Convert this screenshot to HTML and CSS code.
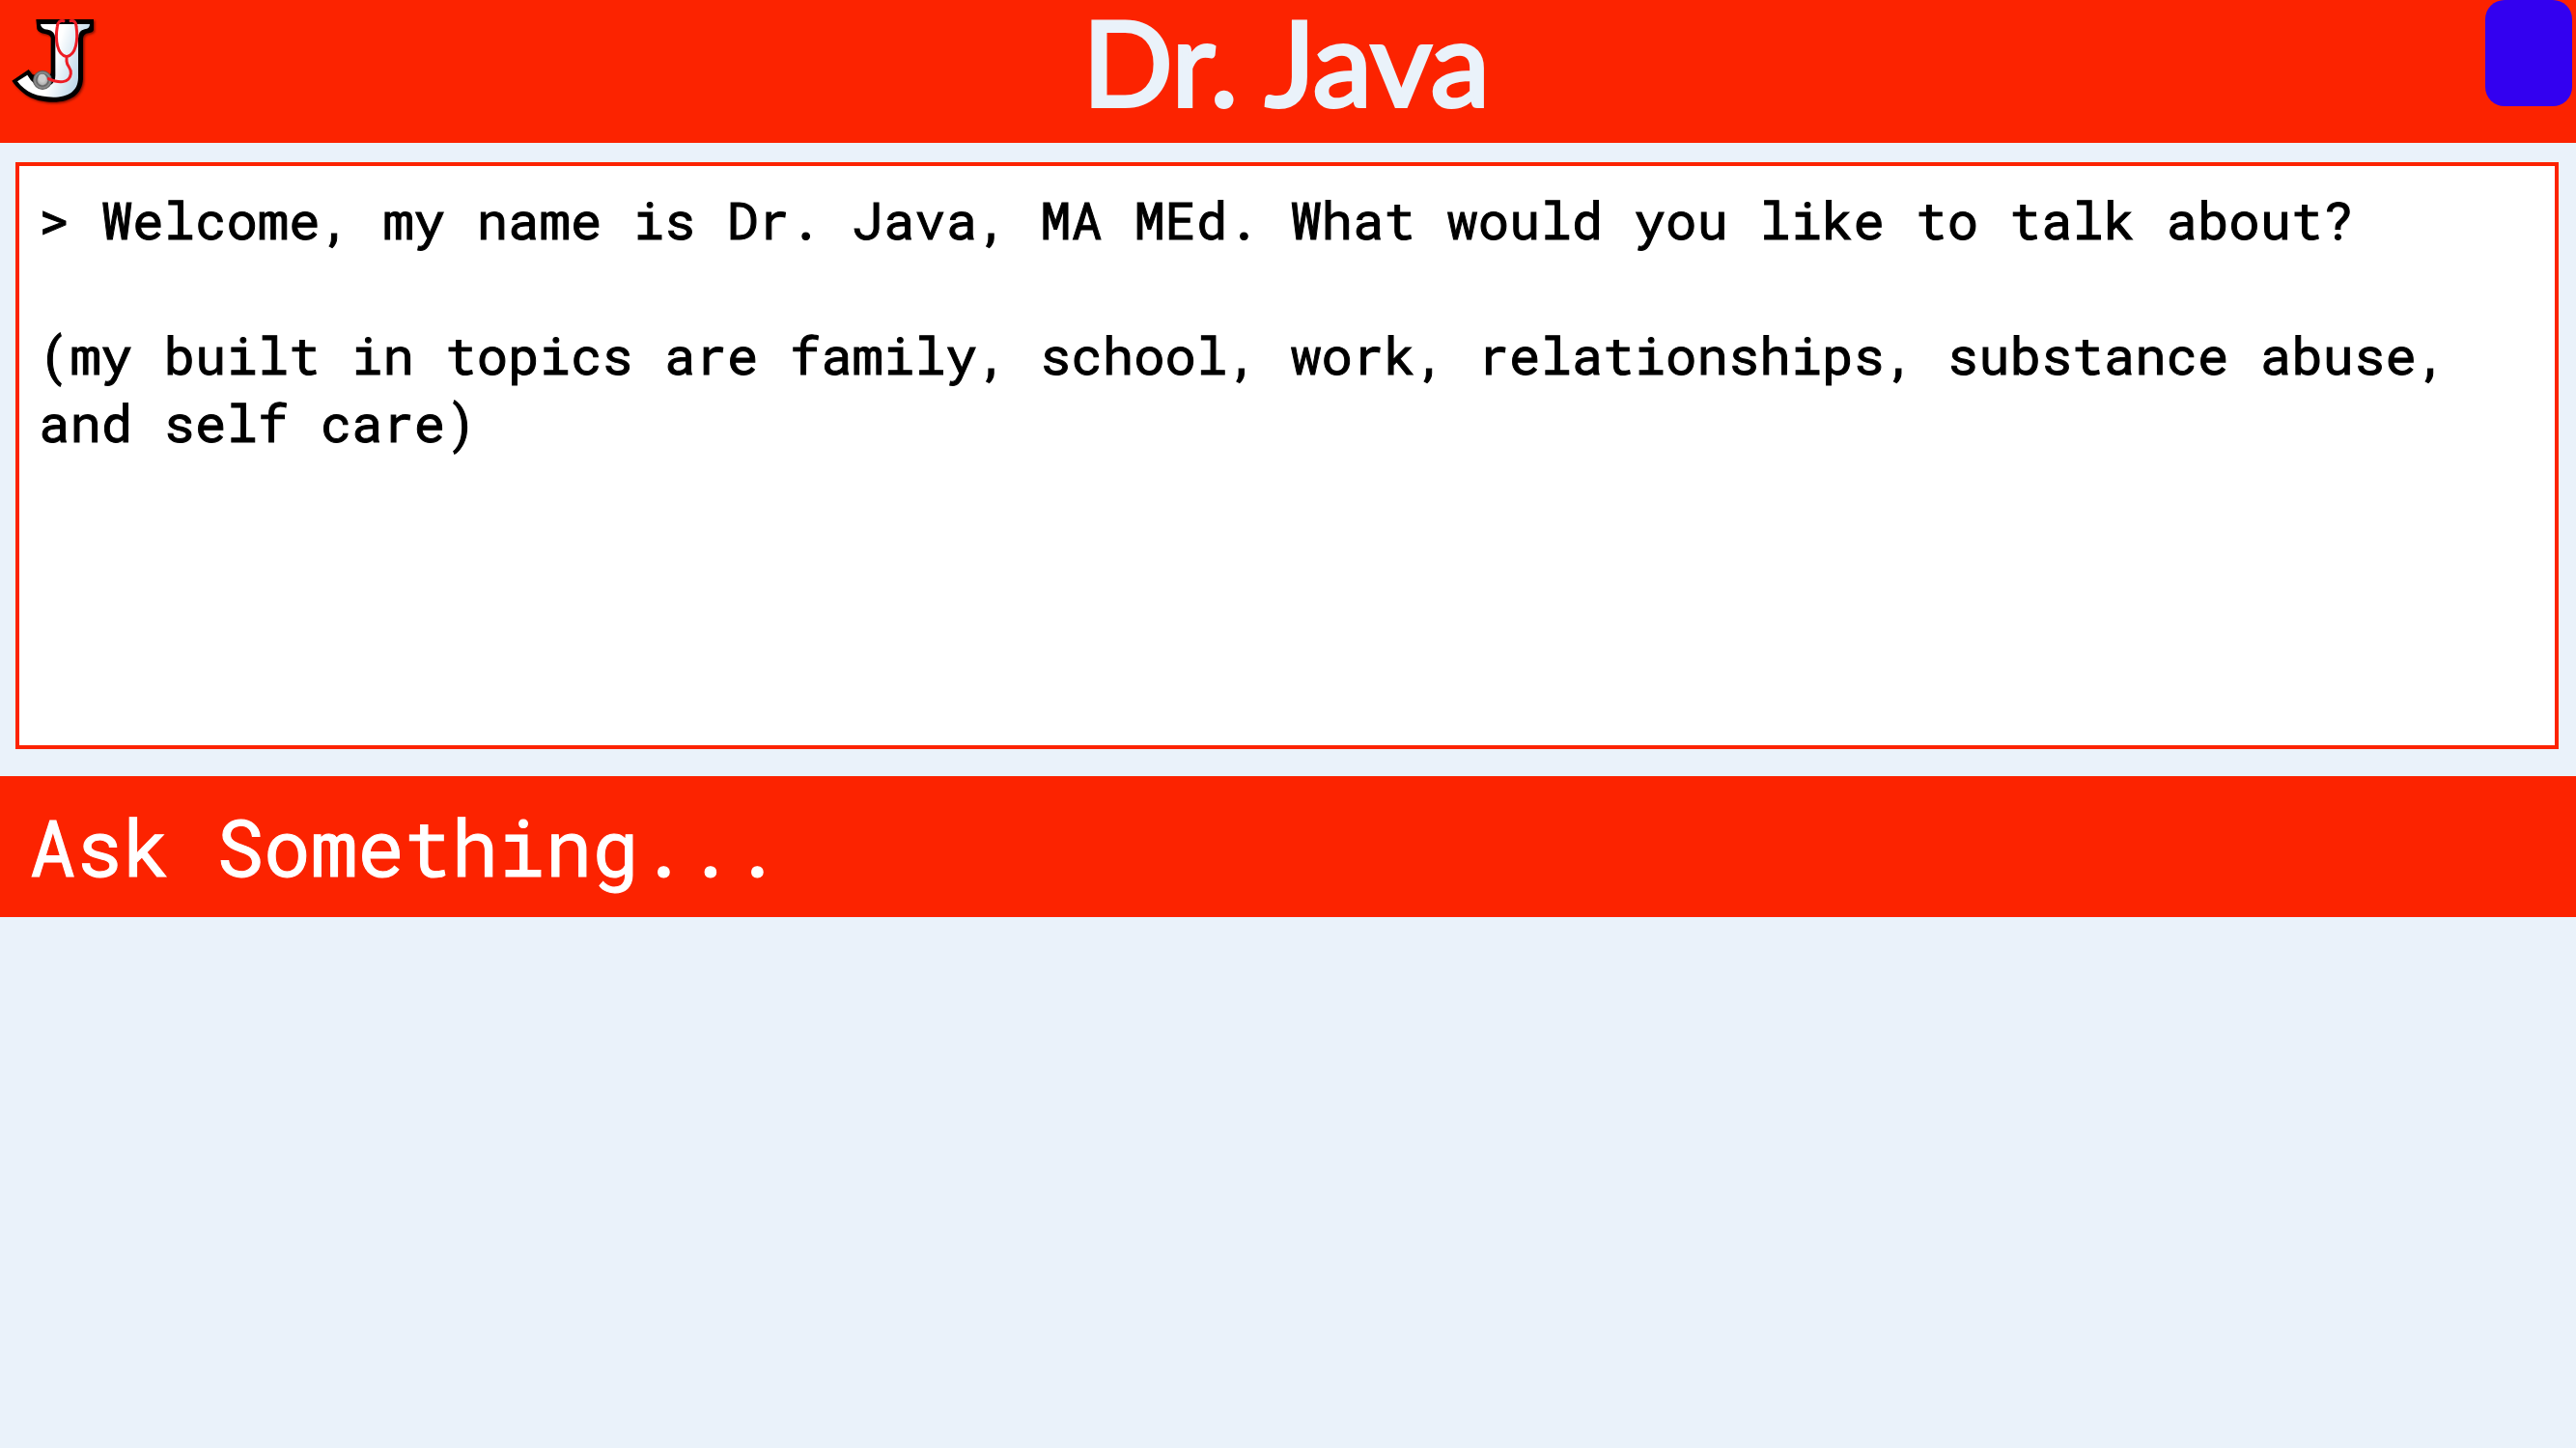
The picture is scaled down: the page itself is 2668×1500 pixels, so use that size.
FILE: index.html
```html
<!DOCTYPE html>
<html lang="en">
<head>
<meta charset="utf-8">
<meta name="viewport" content="width=device-width, initial-scale=1">
<title>Dr. Java</title>
<link rel="stylesheet" href="styles.css">
</head>
<body>
<header class="header">
  <a class="logo" href="#" aria-label="Dr. Java home">
    <svg class="logo-mark" viewBox="0 0 360 360" aria-hidden="true">
      <defs>
        <linearGradient id="face" x1="0" y1="0" x2="1" y2="0.3">
          <stop offset="0.6" stop-color="#fff"/>
          <stop offset="1" stop-color="#b9d5e8"/>
        </linearGradient>
        <radialGradient id="bell">
          <stop offset="0" stop-color="#d8d8d8"/>
          <stop offset="0.45" stop-color="#b5b5b5"/>
          <stop offset="0.6" stop-color="#606060"/>
          <stop offset="0.8" stop-color="#909090"/>
          <stop offset="1" stop-color="#4c4c4c"/>
        </radialGradient>
        <filter id="shadow" x="-10%" y="-10%" width="120%" height="120%">
          <feDropShadow dx="4" dy="4" stdDeviation="3" flood-color="#300" flood-opacity="0.6"/>
        </filter>
      </defs>
      <path filter="url(#shadow)" d="M112 60H291V94Q288 101 276 103Q259 105 258 120V245C256 292 220 317 166 317C112 317 72 300 37 251L89 216L101 232L150 240Q158 236 158 220V118Q156 108 140 105Q122 104 115 91Z"/>
      <path fill="url(#face)" d="M126 75H279Q279 90 263 91Q244 94 243 119V242C242 283 212 302 166 302C116 302 79 287 54 253L85 233Q105 270 137 269Q172 267 172 235V119Q171 96 149 92Q127 91 126 75Z"/>
      <circle cx="132" cy="249" r="30" fill="url(#bell)"/>
      <circle cx="131" cy="242" r="12" fill="#ccc"/>
      <path fill="none" stroke="#ed1c24" stroke-width="9" stroke-linecap="round" stroke-linejoin="round" d="M198 65Q181 61 178 82C171 123 177 171 207 176C237 171 243 123 237 82Q235 61 219 65M207 176V190C208 207 223 211 220 229C216 261 181 258 151 245"/>
    </svg>
  </a>
  <h1 class="title">Dr. Java</h1>
  <button class="menu-button" type="button" aria-label="Menu"></button>
</header>
<main>
  <section class="conversation" aria-live="polite">
    <p class="message">&gt; Welcome, my name is Dr. Java, MA MEd. What would you like to talk about?</p>
    <p class="message">(my built in topics are family, school, work, relationships, substance abuse, and self care)</p>
  </section>
  <form class="ask">
    <input class="ask-input" type="text" aria-label="Ask Something" placeholder="Ask Something...">
  </form>
</main>
</body>
</html>
```
FILE: styles.css
```css
* {
  box-sizing: border-box;
}

body {
  margin: 0;
  background: #eaf2fa;
  font-family: "Roboto Mono", "DejaVu Sans Mono", monospace;
}

.header {
  display: grid;
  grid-template-columns: 1fr auto 1fr;
  align-items: start;
  height: 148px;
  padding-right: 4px;
  background: #fc2300;
}

.logo {
  width: 120px;
  height: 120px;
}

.logo-mark {
  display: block;
  width: 100%;
  height: 100%;
}

.title {
  margin: 0;
  color: #eaf2fa;
  font-family: Lato, sans-serif;
  font-size: 123px;
  font-weight: 400;
  line-height: 126px;
  -webkit-text-stroke: 4px #eaf2fa;
}

.menu-button {
  justify-self: end;
  width: 90px;
  height: 110px;
  padding: 0;
  border: 0;
  border-radius: 20px;
  background: #3300f0;
}

.conversation {
  display: flex;
  flex-direction: column;
  gap: 70px;
  min-height: calc(40vh + 8px);
  margin: 20px 18px 28px 16px;
  padding: 20px;
  border: 4px solid #fc2300;
  background: #fff;
  color: #000;
  font-size: 54px;
  line-height: 70px;
  -webkit-text-stroke: 1px currentColor;
}

.message {
  margin: 0;
}

.ask {
  display: flex;
  background: #fc2300;
}

.ask-input {
  width: 100%;
  height: 146px;
  padding: 0 30px 2px;
  border: 0;
  background: transparent;
  color: #fff;
  font: inherit;
  font-size: 81px;
  -webkit-text-stroke: 1px currentColor;
}

.ask-input::placeholder {
  color: #fff;
  opacity: 1;
}
```
